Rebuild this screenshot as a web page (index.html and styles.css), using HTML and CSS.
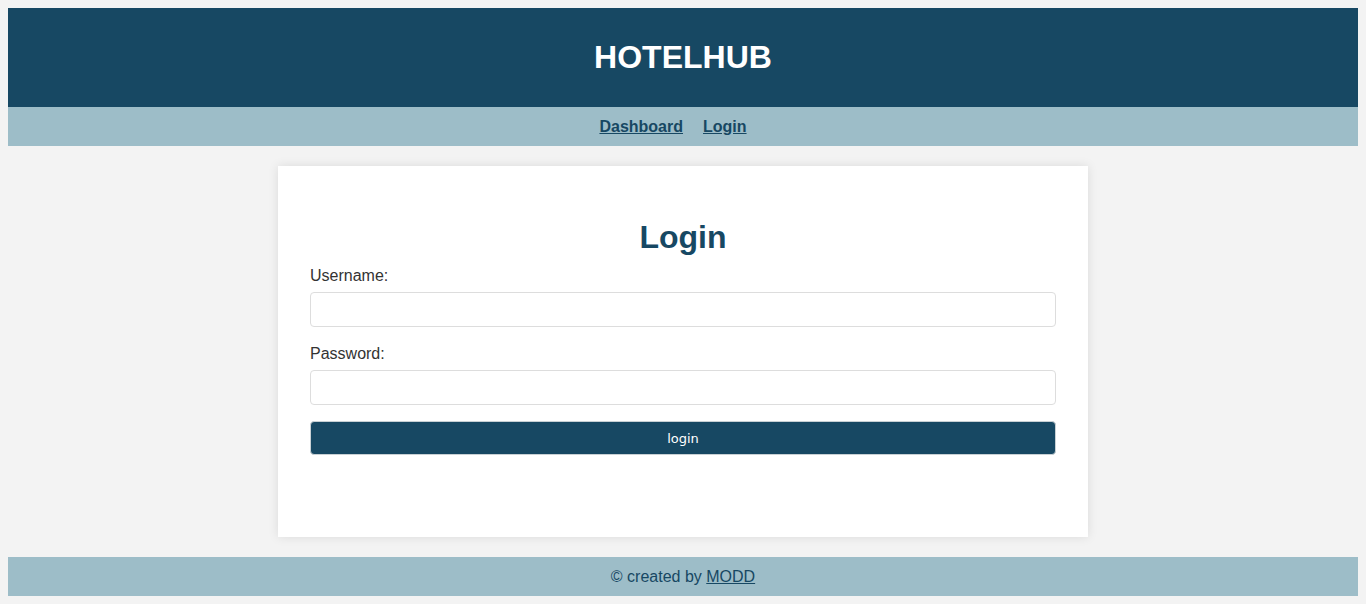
FILE: index.html
```html
<!DOCTYPE html>
<html lang="en">
<head>
<meta charset="utf-8">
<title>HotelHub - Login</title>
<link rel="stylesheet" href="styles.css">
</head>
<body>
<header class="site-header">
  <h1 class="site-title">HOTELHUB</h1>
</header>
<nav class="site-nav">
  <a href="#">Dashboard</a>
  <a href="#">Login</a>
</nav>
<main class="main">
  <section class="card">
    <h2 class="card-title">Login</h2>
    <form class="form">
      <label class="label" for="username">Username:</label>
      <input class="input" id="username" type="text">
      <label class="label" for="password">Password:</label>
      <input class="input" id="password" type="password">
      <button class="btn" type="button">login</button>
    </form>
  </section>
</main>
<footer class="site-footer">
  <span>© created by <a href="#">MODD</a></span>
</footer>
</body>
</html>
```
FILE: styles.css
```css
html, body {
  margin: 0;
  padding: 0;
}
body {
  margin: 8px;
  background: #f3f3f3;
  font-family: "Liberation Sans", Arial, sans-serif;
  font-size: 16px;
  color: #333;
}
.site-header {
  background: #174863;
  height: 99px;
  display: flex;
  align-items: center;
  justify-content: center;
}
.site-title {
  margin: 0;
  color: #fff;
  font-size: 32px;
  font-weight: bold;
  line-height: 37px;
}
.site-nav {
  background: #9dbdc8;
  height: 39px;
  display: flex;
  align-items: center;
  justify-content: center;
}
.site-nav a {
  color: #174863;
  font-weight: bold;
  text-decoration: underline;
  margin-right: 20px;
}
.main {
  display: flex;
  justify-content: center;
  padding: 20px 0;
}
.card {
  width: 810px;
  box-sizing: border-box;
  height: 371px;
  background: #fff;
  padding: 32px 32px;
  box-shadow: 0 0 10px rgba(0, 0, 0, 0.1);
}
.card-title {
  margin: 21px 0 10px;
  text-align: center;
  color: #174863;
  font-size: 32px;
  line-height: 37px;
  font-weight: bold;
}
.form {
  display: flex;
  flex-direction: column;
}
.label {
  display: block;
  line-height: 19px;
  margin-bottom: 7px;
  color: #333;
}
.input {
  display: block;
  box-sizing: border-box;
  width: 100%;
  height: 35px;
  border: 1px solid #ddd;
  border-radius: 4px;
  margin: 0 0 17px;
  padding: 8px;
  font-size: 16px;
  background: #fff;
}
.input:last-of-type {
  margin-bottom: 16px;
}
.btn {
  display: block;
  box-sizing: border-box;
  width: 100%;
  height: 34px;
  background: #174863;
  color: #fff;
  border: 1px solid #c8d0d4;
  border-radius: 4px;
  font-family: "DejaVu Sans", sans-serif;
  font-size: 13px;
  padding: 0;
}
.site-footer {
  background: #9dbdc8;
  height: 39px;
  line-height: 39px;
  text-align: center;
  color: #174863;
}
.site-footer a {
  color: #174863;
  text-decoration: underline;
}
```
